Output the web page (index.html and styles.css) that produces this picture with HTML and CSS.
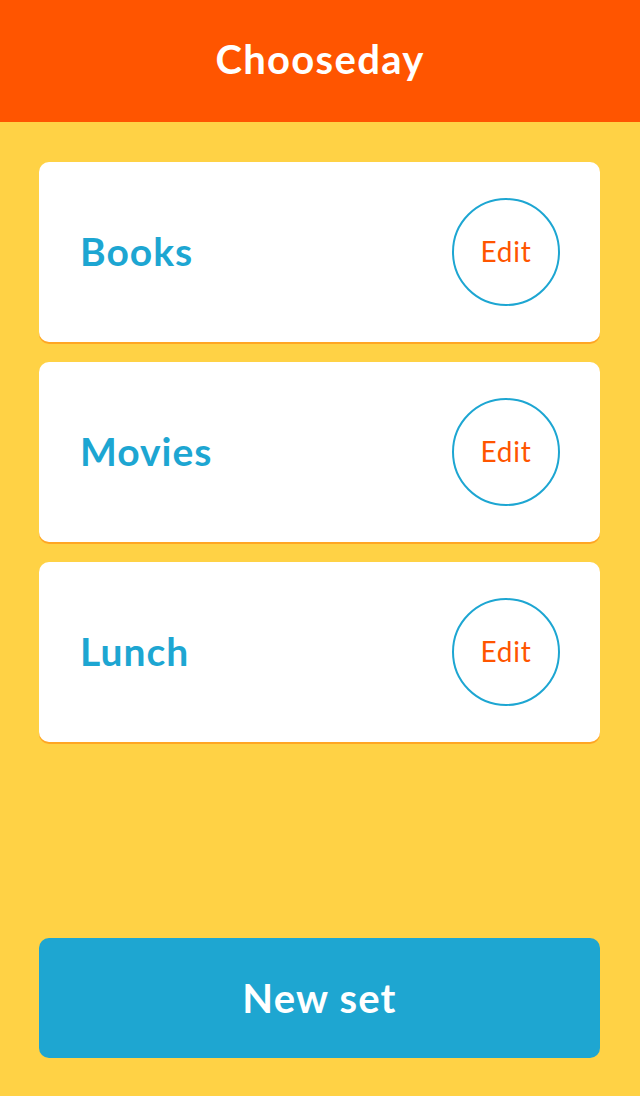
FILE: index.html
```html
<!DOCTYPE html>
<html>
<head>
<meta charset="utf-8">
<link rel="stylesheet" href="styles.css">
</head>
<body>
<div class="app">
  <header class="topbar"><h1 class="title">Chooseday</h1></header>
  <main class="list">
    <div class="card"><span class="card-name">Books</span><button class="edit">Edit</button></div>
    <div class="card"><span class="card-name">Movies</span><button class="edit">Edit</button></div>
    <div class="card"><span class="card-name">Lunch</span><button class="edit">Edit</button></div>
  </main>
  <footer class="bottom"><button class="new-set">New set</button></footer>
</div>
</body>
</html>
```
FILE: styles.css
```css
* { box-sizing: border-box; }
html, body { margin: 0; padding: 0; }
body { font-family: Lato, "Open Sans", sans-serif; background: #FFD245; }
.app { width: 640px; height: 1096px; display: flex; flex-direction: column; background: #FFD245; }
.topbar { height: 122px; background: #FF5500; display: flex; align-items: center; justify-content: center; }
.title { margin: 0; color: #fff; font-size: 40px; font-weight: 700; letter-spacing: 1.3px; padding-bottom: 4px; }
.list { flex: 1; display: flex; flex-direction: column; gap: 20px; padding: 40px 40px 0 39px; }
.card { height: 180px; background: #fff; border-radius: 10px; box-shadow: 0 2px 0 #FFA624; display: flex; align-items: center; justify-content: space-between; padding: 0 40px 0 41px; }
.card-name { color: #1DA6D2; font-size: 39px; font-weight: 700; letter-spacing: 1px; padding-bottom: 2px; }
.edit { width: 108px; height: 108px; border-radius: 50%; border: 2px solid #1DA6D2; background: #fff; color: #FF5500; font-family: Lato, sans-serif; font-size: 28px; font-weight: 400; letter-spacing: 0.8px; padding: 0 0 2px; }
.bottom { padding: 0 40px 38px 39px; }
.new-set { width: 100%; height: 120px; border: none; border-radius: 10px; background: #1EA6D1; color: #fff; font-family: Lato, sans-serif; font-size: 40px; font-weight: 700; letter-spacing: 1.2px; padding-bottom: 2px; }
```
